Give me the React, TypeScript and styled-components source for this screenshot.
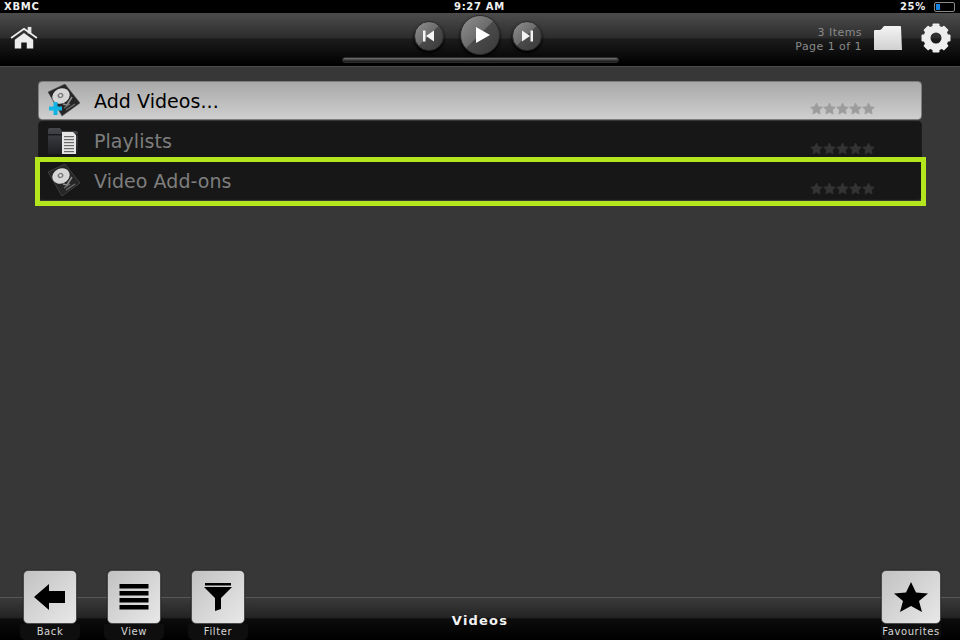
import React from 'react';
import styled, { createGlobalStyle } from 'styled-components';

const GlobalStyle = createGlobalStyle`
  html, body {
    margin: 0;
    padding: 0;
    background: #373737;
    overflow: hidden;
  }
  * {
    box-sizing: border-box;
  }
`;

const Page = styled.div`
  width: 960px;
  height: 640px;
  display: flex;
  flex-direction: column;
  font-family: 'DejaVu Sans', sans-serif;
  background: #373737;
`;

const StatusBar = styled.div`
  height: 13px;
  background: #000;
  color: #f0f0f0;
  display: grid;
  grid-template-columns: 1fr auto 1fr;
  align-items: center;
  padding: 0 5px 0 4px;
  font-size: 10px;
  font-weight: 700;
  letter-spacing: 0.7px;
  line-height: 13px;
`;

const StatusRight = styled.div`
  display: flex;
  justify-content: flex-end;
  align-items: center;
  gap: 8px;
`;

const Battery = styled.div`
  width: 21px;
  height: 10px;
  border: 1px solid #8a8a8a;
  border-radius: 2px;
  padding: 1px;
  display: flex;
`;

const BatteryFill = styled.div`
  width: 4px;
  background: #1683e0;
`;

const Header = styled.header`
  height: 54px;
  display: grid;
  grid-template-columns: 1fr 277px 1fr;
  padding: 0 9px 0 10px;
  background: linear-gradient(#4c4c4c 0%, #2c2c2c 47%, #1c1c1c 49%, #000 98%);
  border-bottom: 1px solid #4a4a4a;
`;

const HeaderLeft = styled.div`
  display: flex;
  align-items: flex-start;
  padding-top: 13px;
`;

const HeaderCenter = styled.div`
  display: flex;
  flex-direction: column;
  padding-top: 1px;
`;

const Transport = styled.div`
  height: 43px;
  display: flex;
  align-items: center;
  padding-left: 72px;
`;

const RoundButton = styled.div<{ $size: number }>`
  width: ${(p) => p.$size}px;
  height: ${(p) => p.$size}px;
  border-radius: 50%;
  flex-shrink: 0;
  display: flex;
  align-items: center;
  justify-content: center;
  background: linear-gradient(135deg, #909090 0%, #6c6c6c 48%, #4a4a4a 50%, #3a3a3a 100%);
  border: 1px solid #2a2a2a;
  box-shadow: 0 2px 3px #000;
`;

const PlayButton = styled(RoundButton)`
  margin: -2px 12px 0 16px;
  padding-left: 6px;
`;

const ProgressTrack = styled.div`
  height: 6px;
  border-radius: 3px;
  background: linear-gradient(#777, #333 60%, #1a1a1a);
  border: 1px solid #2a2a2a;
`;

const HeaderRight = styled.div`
  display: flex;
  justify-content: flex-end;
  align-items: flex-start;
  padding-top: 12px;
`;

const PageInfo = styled.div`
  color: #8a8a8a;
  font-size: 11px;
  line-height: 14px;
  letter-spacing: 0.45px;
  text-align: right;
  margin: 1px 12px 0 0;
`;

const GearWrap = styled.div`
  margin-left: 19px;
  margin-top: -2px;
`;

const Main = styled.main`
  flex: 1;
  padding: 14px 38px 0;
  display: flex;
  flex-direction: column;
  gap: 1px;
`;

const Row = styled.div<{ $active?: boolean }>`
  position: relative;
  height: 39px;
  display: flex;
  align-items: center;
  padding: 0 46px 0 8px;
  border-radius: 4px;
  color: ${(p) => (p.$active ? '#000' : '#7e7e7e')};
  background: ${(p) =>
    p.$active ? 'linear-gradient(#a9a9a9, #cfcfcf)' : '#171717'};
  border: 1px solid ${(p) => (p.$active ? '#7d7d7d' : '#1c1c1c')};
`;

const RowIcon = styled.div`
  width: 34px;
  height: 34px;
  flex-shrink: 0;
`;

const RowLabel = styled.div`
  flex: 1;
  margin-left: 13px;
  font-size: 19px;
  letter-spacing: 0.05px;
`;

const Stars = styled.div`
  align-self: flex-end;
  display: flex;
  padding-bottom: 4px;
`;

const FocusRing = styled.div`
  position: absolute;
  left: -4px;
  right: -5px;
  top: -5px;
  bottom: -7px;
  border: 5px solid #b4e61e;
  pointer-events: none;
`;

const Footer = styled.footer`
  height: 43px;
  display: grid;
  grid-template-columns: 1fr auto 1fr;
  background: linear-gradient(#3a3a3a 0%, #242424 46%, #0c0c0c 50%, #000 100%);
  border-top: 1px solid #565656;
`;

const FooterGroup = styled.div<{ $end?: boolean }>`
  display: flex;
  gap: 30px;
  padding: ${(p) => (p.$end ? '0 19px 0 0' : '0 0 0 23px')};
  justify-content: ${(p) => (p.$end ? 'flex-end' : 'flex-start')};
`;

const FooterItem = styled.div`
  width: 54px;
  margin-top: -28px;
  display: flex;
  flex-direction: column;
  align-items: center;
`;

const FavouritesItem = styled(FooterItem)`
  width: 60px;
`;

const SquareButton = styled.div`
  width: 54px;
  height: 54px;
  border-radius: 5px;
  display: flex;
  align-items: center;
  justify-content: center;
  background: linear-gradient(135deg, #c2c2c2, #e8e8e8);
  border: 1px solid #4a4a4a;
  box-shadow: 0 0 1px #000;
`;

const FavouritesButton = styled(SquareButton)`
  width: 60px;
`;

const FooterLabel = styled.div`
  width: 60px;
  height: 16px;
  text-align: center;
  color: #d4d4d4;
  font-size: 10px;
  line-height: 16px;
  letter-spacing: 0.6px;
  white-space: nowrap;
  background: #0e0e0e;
  border-radius: 0 0 5px 5px;
`;

const Title = styled.div`
  color: #f2f2f2;
  font-size: 13px;
  font-weight: 700;
  letter-spacing: 1.2px;
  line-height: 45px;
`;

const STAR_POINTS = '6.5,1 8.3,4.7 12.3,5.2 9.4,8 10.1,12 6.5,10.1 2.9,12 3.6,8 0.7,5.2 4.700,4.7';

function StarRow({ color }: { color: string }) {
  return (
    <Stars>
      {[0, 1, 2, 3, 4].map((i) => (
        <svg key={i} width="13" height="13" viewBox="0 0 13 13">
          <polygon points={STAR_POINTS} fill={color} stroke={color} strokeWidth="0.8" strokeLinejoin="round" />
        </svg>
      ))}
    </Stars>
  );
}

// tilted hard drive, same drawing for both rows, the first one gets the blue plus
function DiskIcon({ plus }: { plus?: boolean }) {
  return (
    <svg width="34" height="34" viewBox="0 0 34 34">
      <polygon points="1,8 18,0 33,19 15,32" fill="#262626" stroke="#555" strokeWidth="0.6" strokeLinejoin="round" />
      <ellipse cx="14" cy="12" rx="9" ry="7.500" transform="rotate(-25 14 12)" fill="#d6d6d6" />
      <ellipse cx="13.500" cy="11.500" rx="3" ry="2.600" transform="rotate(-25 13.500 11.500)" fill="#7c7c7c" />
      <circle cx="13.500" cy="11.500" r="1.200" fill="#ededed" />
      <path d="M25 13 L20 21 L16 20" stroke="#8c8c8c" strokeWidth="1.600" fill="none" />
      <path d="M19 26 L28 20 M17 24 L23 20" stroke="#6e6e6e" strokeWidth="1.400" />
      {plus && <path d="M6.500 18h4v4.500H15v4h-4.500V31h-4v-4.500H2v-4h4.500z" fill="#12b4e4" />}
    </svg>
  );
}

function PlaylistIcon() {
  return (
    <svg width="34" height="34" viewBox="0 0 34 34">
      <defs>
        <linearGradient id="playlist-folder" x1="0" y1="0" x2="0" y2="1">
          <stop offset="0" stopColor="#45474c" />
          <stop offset="1" stopColor="#1e1f22" />
        </linearGradient>
      </defs>
      <path d="M1 6 Q1 4 3 4 H13 L15 7 H29 Q31 7 31 9 V28 Q31 30 29 30 H3 Q1 30 1 28z" fill="url(#playlist-folder)" />
      <rect x="1" y="10" width="30" height="1.500" fill="#1a1b1e" />
      <path d="M15 8 H26 L29 11 V30 H15z" fill="#e6e6e6" />
      {[12, 15, 18, 21, 24, 27].map((y) => (
        <rect key={y} x="17" y={y} width="10" height="1.200" fill="#6a6a6a" />
      ))}
    </svg>
  );
}

function HomeIcon() {
  return (
    <svg width="28" height="24" viewBox="0 0 30 26">
      <rect x="19" y="1" width="4" height="7" fill="#e6e6e6" />
      <path d="M1 13 L15 3 L29 13" stroke="#eee" strokeWidth="1.800" fill="none" />
      <path d="M5 15 L15 7.500 L25 15 V24.500 H18 V18 H12 V24.500 H5z" fill="#ececec" />
    </svg>
  );
}

function FolderIcon() {
  return (
    <svg width="28" height="26" viewBox="0 0 28 26">
      <defs>
        <linearGradient id="folder-fill" x1="0" y1="0" x2="0" y2="1">
          <stop offset="0" stopColor="#f4f4f4" />
          <stop offset="1" stopColor="#d0d0d0" />
        </linearGradient>
      </defs>
      <path d="M0 6 Q0 5 1 5 H6 Q8 4 10 1 H26 Q27 1 27 2 L28 25 H0z" fill="url(#folder-fill)" />
    </svg>
  );
}

function GearIcon() {
  const teeth = [0, 45, 90, 135, 180, 225, 270, 315];
  return (
    <svg width="30" height="30" viewBox="0 0 30 30">
      {teeth.map((a) => (
        <rect key={a} x="11.500" y="0.500" width="7" height="7" rx="1" fill="#eee" transform={`rotate(${a} 15 15)`} />
      ))}
      <circle cx="15" cy="15" r="9" fill="none" stroke="#eee" strokeWidth="7" />
    </svg>
  );
}

export default function App() {
  return (
    <Page>
      <GlobalStyle />
      <StatusBar>
        <div>XBMC</div>
        <div>9:27 AM</div>
        <StatusRight>
          <span>25%</span>
          <Battery>
            <BatteryFill />
          </Battery>
        </StatusRight>
      </StatusBar>

      <Header>
        <HeaderLeft>
          <HomeIcon />
        </HeaderLeft>
        <HeaderCenter>
          <Transport>
            <RoundButton $size={30}>
              <svg width="14" height="12" viewBox="0 0 14 12">
                <rect x="1" y="0.500" width="2.500" height="11" fill="#f4f4f4" />
                <polygon points="12,0.500 12,11.500 4,6" fill="#f4f4f4" />
              </svg>
            </RoundButton>
            <PlayButton $size={40}>
              <svg width="16" height="18" viewBox="0 0 16 18">
                <polygon points="1,1 15,9 1,17" fill="#fff" />
              </svg>
            </PlayButton>
            <RoundButton $size={30}>
              <svg width="14" height="12" viewBox="0 0 14 12">
                <polygon points="2,0.500 2,11.500 10,6" fill="#f4f4f4" />
                <rect x="10.500" y="0.500" width="2.500" height="11" fill="#f4f4f4" />
              </svg>
            </RoundButton>
          </Transport>
          <ProgressTrack />
        </HeaderCenter>
        <HeaderRight>
          <PageInfo>
            3 Items
            <br />
            Page 1 of 1
          </PageInfo>
          <FolderIcon />
          <GearWrap>
            <GearIcon />
          </GearWrap>
        </HeaderRight>
      </Header>

      <Main>
        <Row $active>
          <RowIcon>
            <DiskIcon plus />
          </RowIcon>
          <RowLabel>Add Videos...</RowLabel>
          <StarRow color="#9c9c9c" />
        </Row>
        <Row>
          <RowIcon>
            <PlaylistIcon />
          </RowIcon>
          <RowLabel>Playlists</RowLabel>
          <StarRow color="#333" />
        </Row>
        <Row>
          <RowIcon>
            <DiskIcon />
          </RowIcon>
          <RowLabel>Video Add-ons</RowLabel>
          <StarRow color="#333" />
          <FocusRing />
        </Row>
      </Main>

      <Footer>
        <FooterGroup>
          <FooterItem>
            <SquareButton>
              <svg width="32" height="28" viewBox="0 0 32 28">
                <polygon points="0,14 15,1 15,8 31,8 31,20 15,20 15,27" fill="#000" />
              </svg>
            </SquareButton>
            <FooterLabel>Back</FooterLabel>
          </FooterItem>
          <FooterItem>
            <SquareButton>
              <svg width="30" height="26" viewBox="0 0 30 26">
                {[0, 7, 14, 21].map((y) => (
                  <rect key={y} x="0.500" y={y} width="29" height="4.500" fill="#000" />
                ))}
              </svg>
            </SquareButton>
            <FooterLabel>View</FooterLabel>
          </FooterItem>
          <FooterItem>
            <SquareButton>
              <svg width="28" height="28" viewBox="0 0 28 28">
                <rect x="1" y="0" width="26" height="2.500" fill="#000" />
                <polygon points="0,4 28,4 17,15 17,26 11,28 11,15" fill="#000" />
              </svg>
            </SquareButton>
            <FooterLabel>Filter</FooterLabel>
          </FooterItem>
        </FooterGroup>
        <Title>Videos</Title>
        <FooterGroup $end>
          <FavouritesItem>
            <FavouritesButton>
              <svg width="36" height="32" viewBox="0 0 36 32">
                <polygon points="18,1 23,11.500 35,12.500 26,20 29,31 18,25 7,31 10,20 1,12.500 13,11.500" fill="#000" />
              </svg>
            </FavouritesButton>
            <FooterLabel>Favourites</FooterLabel>
          </FavouritesItem>
        </FooterGroup>
      </Footer>
    </Page>
  );
}
